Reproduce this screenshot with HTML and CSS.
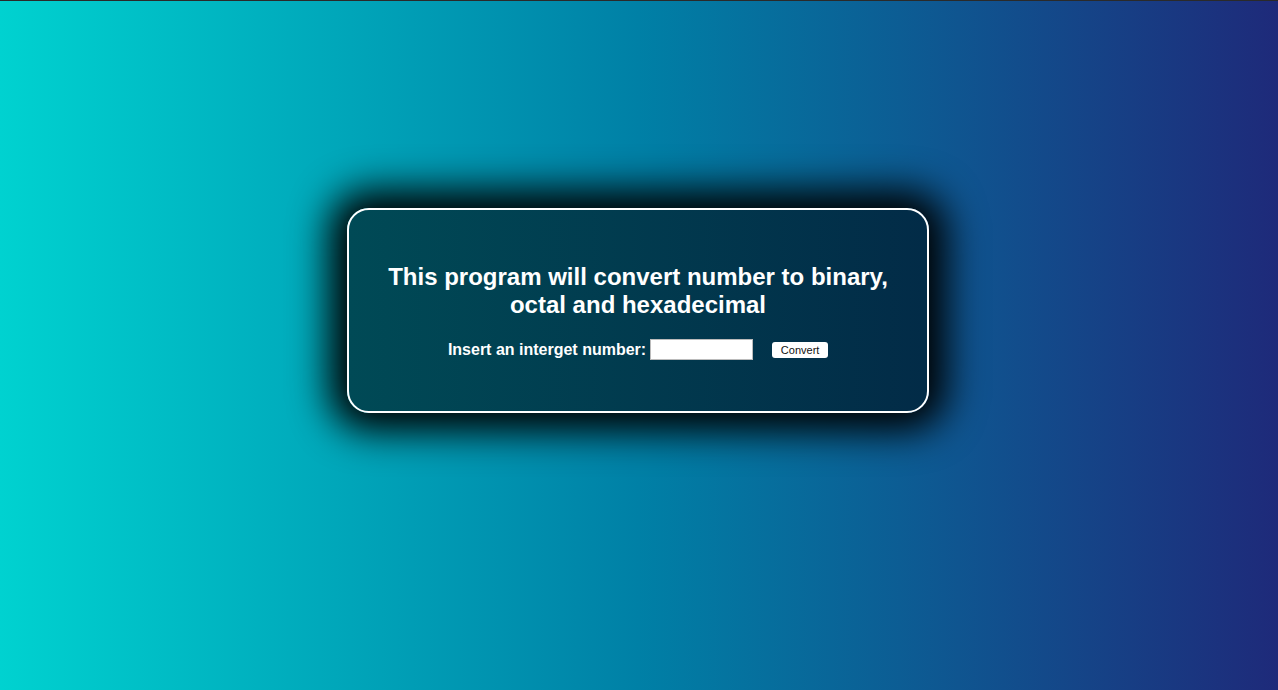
FILE: index.html
```html
<!DOCTYPE html>
<html lang="en">
<head>
<meta charset="utf-8">
<title>Number converter</title>
<link rel="stylesheet" href="styles.css">
</head>
<body>
<div class="topline"></div>
<div class="stage">
  <main class="card">
    <h1 class="title">This program will convert number to binary,<br>octal and hexadecimal</h1>
    <form class="row">
      <label class="label" for="num">Insert an interget number:</label>
      <input class="input" id="num" type="text">
      <button class="btn" type="button">Convert</button>
    </form>
  </main>
</div>
</body>
</html>
```
FILE: styles.css
```css
html, body {
  margin: 0;
  padding: 0;
}
body {
  min-height: 690px;
  background: linear-gradient(to right, #00d2d0 0%, #0080a6 50%, #1e2a7a 100%);
  font-family: "Liberation Sans", Arial, sans-serif;
  color: #fff;
  overflow: hidden;
}
.topline {
  height: 1px;
  background: #2a2a2a;
}
.stage {
  display: flex;
  justify-content: center;
  padding: 207px 2px 0 0;
}
.card {
  box-sizing: border-box;
  width: 582px;
  height: 205px;
  padding: 53px 20px 0;
  border: 2px solid #fff;
  border-radius: 22px;
  background: linear-gradient(to right, #004a56, #022b47);
  box-shadow: 0 0 38px 18px #000;
}
.title {
  margin: 0;
  font-size: 24px;
  line-height: 28px;
  font-weight: bold;
  text-align: center;
}
.row {
  display: flex;
  justify-content: center;
  align-items: center;
  margin-top: 20px;
}
.label {
  font-size: 16px;
  font-weight: bold;
  margin-right: 4px;
}
.input {
  box-sizing: border-box;
  width: 103px;
  height: 21px;
  border: 1px solid #bbb;
  background: #fff;
  padding: 0 3px;
}
.btn {
  box-sizing: border-box;
  width: 56px;
  height: 16px;
  margin-left: 19px;
  padding: 0;
  border: none;
  border-radius: 3px;
  background: #fff;
  color: #111;
  font-family: "Liberation Sans", Arial, sans-serif;
  font-size: 11px;
  line-height: 16px;
}
```
